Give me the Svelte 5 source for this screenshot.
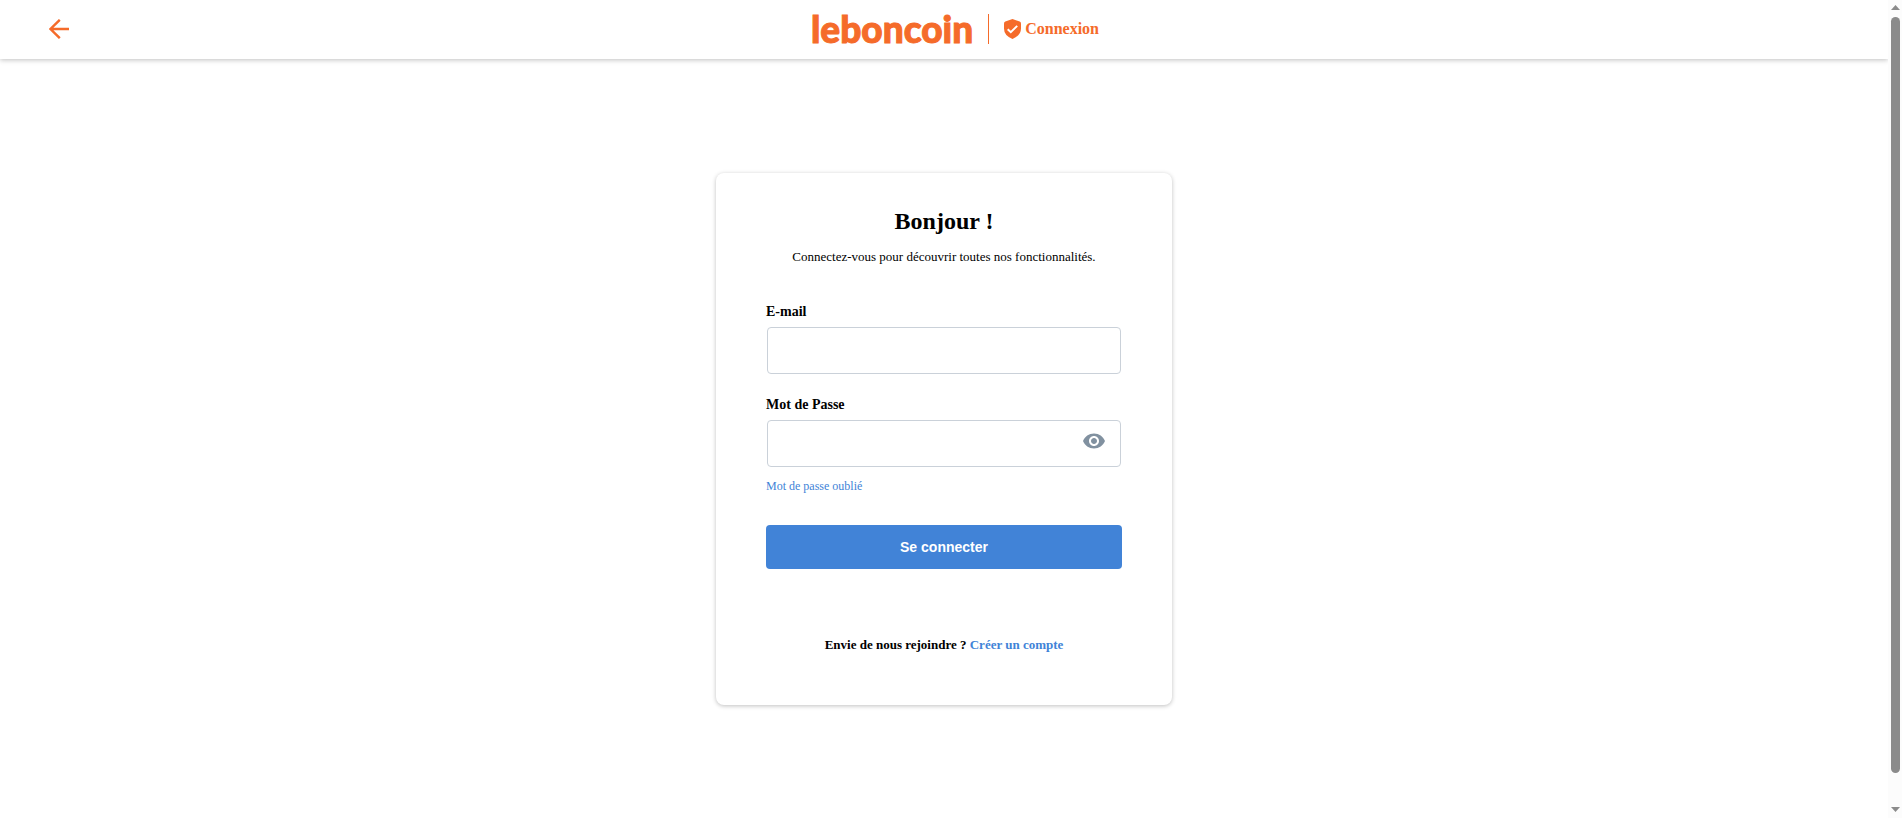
<script>
  let email = $state('');
  let password = $state('');
  let visible = $state(false);
</script>

<div class="shell">
  <div class="page">
    <header>
      <a class="back" href="#retour" aria-label="Retour">
        <svg width="20" height="20" viewBox="0 0 20 20" aria-hidden="true">
          <path d="M20 10H1.500M10.800 .800 1.500 10 10.800 19.200" />
        </svg>
      </a>
      <div class="brand">
        <span class="logo">leboncoin</span>
        <span class="rule"></span>
        <span class="secure">
          <svg width="17" height="20" viewBox="0 0 17 20" aria-hidden="true">
            <path class="shield" d="M8.500 0 15.700 2.600Q17 3.200 17 4.600V9.500Q17 16.500 8.500 20Q0 16.500 0 9.500V4.600Q0 3.200 1.300 2.600Z" />
            <path class="check" d="M3.700 10.200 6.800 13.200 13.200 6.900" />
          </svg>
          Connexion
        </span>
      </div>
    </header>

    <main>
      <form class="card" onsubmit={(e) => e.preventDefault()}>
        <h1>Bonjour !</h1>
        <p class="intro">Connectez-vous pour découvrir toutes nos fonctionnalités.</p>

        <div class="field">
          <label for="email">E-mail</label>
          <input id="email" type="email" bind:value={email} />
        </div>

        <div class="field">
          <label for="password">Mot de Passe</label>
          <div class="secret">
            <input id="password" type={visible ? 'text' : 'password'} value={password} oninput={(e) => (password = e.currentTarget.value)} />
            <button class="eye" type="button" aria-label="Afficher le mot de passe" onclick={() => (visible = !visible)}>
              <svg width="24" height="24" viewBox="0 0 24 24" aria-hidden="true">
                <path d="M12 4.500C7 4.500 2.730 7.610 1 12c1.730 4.390 6 7.500 11 7.500s9.270-3.110 11-7.500c-1.730-4.390-6-7.500-11-7.500zM12 17c-2.760 0-5-2.240-5-5s2.240-5 5-5 5 2.240 5 5-2.240 5-5 5zm0-8c-1.660 0-3 1.340-3 3s1.340 3 3 3 3-1.340 3-3-1.340-3-3-3z" />
              </svg>
            </button>
          </div>
        </div>

        <a class="forgot" href="#oublie">Mot de passe oublié</a>
        <button class="submit" type="submit">Se connecter</button>
        <p class="join">Envie de nous rejoindre ? <a href="#compte">Créer un compte</a></p>
      </form>
    </main>
  </div>

  <div class="scrollbar" aria-hidden="true">
    <svg width="9" height="5" viewBox="0 0 9 5"><path d="M4.500 0 9 5H0z" /></svg>
    <span class="thumb"></span>
    <svg width="9" height="5" viewBox="0 0 9 5"><path d="M0 0H9L4.500 5z" /></svg>
  </div>
</div>

<style>
  :global(body) {
    margin: 0;
    background: #fff;
  }
  .shell {
    display: flex;
    min-height: 100vh;
    font-family: "Liberation Serif", "Times New Roman", serif;
    color: #000;
  }
  .page {
    flex: 1;
    min-width: 0;
  }
  header {
    display: flex;
    align-items: center;
    box-sizing: border-box;
    height: 59px;
    padding: 0 48px 2px;
    background: #fff;
    box-shadow: 0 1px 5px rgba(0, 0, 0, 0.25);
  }
  .back {
    display: flex;
    justify-content: center;
    width: 22px;
    fill: none;
    stroke: #f56b2a;
    stroke-width: 2.4;
  }
  .brand {
    flex: 1;
    display: flex;
    align-items: center;
    justify-content: center;
    gap: 15px;
    color: #f56b2a;
  }
  .logo {
    font: 900 37px/40px Lato, sans-serif;
    -webkit-text-stroke: 1px #f56b2a;
  }
  .rule {
    width: 1px;
    height: 30px;
    background: #f56b2a;
  }
  .secure {
    display: flex;
    align-items: center;
    gap: 4px;
    font-size: 16px;
    font-weight: bold;
    line-height: 20px;
  }
  .shield {
    fill: #f56b2a;
  }
  .check {
    fill: none;
    stroke: #fff;
    stroke-width: 2;
  }
  main {
    display: flex;
    justify-content: center;
    padding: 114px 16px;
  }
  .card {
    display: flex;
    flex-direction: column;
    box-sizing: border-box;
    width: 100%;
    max-width: 456px;
    padding: 34px 50px 52px;
    border-radius: 8px;
    background: #fff;
    box-shadow: 0 1px 4px rgba(0, 0, 0, 0.25);
  }
  h1 {
    margin: 0 0 14px;
    font-size: 24px;
    line-height: 28px;
    text-align: center;
  }
  p {
    margin: 0;
    font-size: 13px;
    line-height: 16px;
    text-align: center;
  }
  .intro {
    margin-bottom: 38px;
  }
  .field {
    display: flex;
    flex-direction: column;
    gap: 6px;
    margin-bottom: 22px;
  }
  label {
    font-size: 14px;
    font-weight: bold;
    line-height: 18px;
  }
  input {
    box-sizing: border-box;
    height: 47px;
    margin: 0 1px;
    padding: 0 16px;
    border: 1px solid #cad1d9;
    border-radius: 4px;
    background: #fff;
    font: inherit;
    font-size: 16px;
  }
  .secret {
    position: relative;
    display: flex;
  }
  .secret input {
    flex: 1;
    min-width: 0;
    padding-right: 48px;
  }
  .eye {
    position: absolute;
    top: 9px;
    right: 16px;
    display: flex;
    padding: 0;
    border: 0;
    background: none;
    fill: #8191a0;
    cursor: pointer;
  }
  a {
    color: #4183d7;
    text-decoration: none;
  }
  .field:has(+ .forgot) {
    margin-bottom: 12px;
  }
  .forgot {
    align-self: flex-start;
    font-size: 12px;
    line-height: 14px;
  }
  .submit {
    height: 44px;
    margin: 32px 0 68px;
    border: 0;
    border-radius: 4px;
    background: #4183d7;
    color: #fff;
    font: bold 14px "Liberation Sans", Arial, sans-serif;
    cursor: pointer;
  }
  .join {
    font-weight: bold;
  }
  .scrollbar {
    position: sticky;
    top: 0;
    display: flex;
    flex-direction: column;
    align-items: center;
    box-sizing: border-box;
    width: 14px;
    height: 100vh;
    padding: 5px 0 6px;
    background: #fcfcfc;
    fill: #8b8b8b;
  }
  .scrollbar svg {
    flex: none;
  }
  .thumb {
    flex: 1;
    width: 9px;
    margin: 7px 0 34px;
    border-radius: 5px;
    background: #8b8b8b;
  }
</style>
